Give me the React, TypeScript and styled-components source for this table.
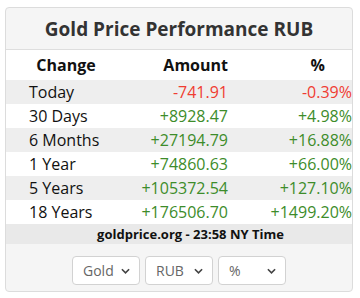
import styled, { createGlobalStyle } from "styled-components";

type Row = {
  label: string;
  amount: string;
  percent: string;
};

const rows: Row[] = [
  { label: "Today", amount: "-741.91", percent: "-0.39%" },
  { label: "30 Days", amount: "+8928.47", percent: "+4.98%" },
  { label: "6 Months", amount: "+27194.79", percent: "+16.88%" },
  { label: "1 Year", amount: "+74860.63", percent: "+66.00%" },
  { label: "5 Years", amount: "+105372.54", percent: "+127.10%" },
  { label: "18 Years", amount: "+176506.70", percent: "+1499.20%" },
];

const selects = [
  { value: "Gold", options: ["Gold", "Silver"] },
  { value: "RUB", options: ["RUB", "USD", "EUR"] },
  { value: "%", options: ["%", "Amount"] },
];

export default function App() {
  return (
    <>
      <GlobalStyle />
      <Card>
        <Header>Gold Price Performance RUB</Header>
        <Table>
          <HeadRow>
            <HeadCell $align="center">Change</HeadCell>
            <HeadCell $align="right">Amount</HeadCell>
            <HeadCell $align="right" $padRight={27}>
              %
            </HeadCell>
          </HeadRow>
          {rows.map((r, i) => {
            const down = r.amount.startsWith("-");
            return (
              <DataRow key={r.label} $striped={i % 2 === 0}>
                <Label>{r.label}</Label>
                <Value $down={down}>{r.amount}</Value>
                <Value $down={down}>{r.percent}</Value>
              </DataRow>
            );
          })}
        </Table>
        <Footer>goldprice.org - 23:58 NY Time</Footer>
        <Controls>
          {selects.map((s) => (
            <SelectBox key={s.value}>
              <Select defaultValue={s.value}>
                {s.options.map((o) => (
                  <option key={o}>{o}</option>
                ))}
              </Select>
              <Chevron viewBox="0 0 10 6">
                <path d="M1 1l4 4 4-4" />
              </Chevron>
            </SelectBox>
          ))}
        </Controls>
      </Card>
    </>
  );
}

const GlobalStyle = createGlobalStyle`
  body {
    margin: 0;
    background: #fff;
    font-family: "Open Sans", "Liberation Sans", sans-serif;
  }
`;

const Card = styled.div`
  margin: 7px 0 0 5px;
  width: 346px;
  border: 1px solid #dcdcdc;
  border-radius: 4px;
  overflow: hidden;
  background: #f5f5f5;
`;

const Header = styled.div`
  height: 41px;
  display: flex;
  align-items: center;
  justify-content: center;
  border-bottom: 1px solid #dedede;
  font-size: 19px;
  font-weight: 700;
  color: #333;
`;

const Table = styled.div`
  background: #fff;
`;

const HeadRow = styled.div`
  display: grid;
  grid-template-columns: 120px 102px 1fr;
  height: 30px;
  align-items: center;
`;

const HeadCell = styled.div<{ $align: string; $padRight?: number }>`
  text-align: ${(p) => p.$align};
  padding-right: ${(p) => p.$padRight ?? 0}px;
  font-size: 16px;
  font-weight: 700;
  color: #111;
`;

const DataRow = styled.div<{ $striped: boolean }>`
  display: grid;
  grid-template-columns: 120px 102px 1fr;
  height: 24px;
  align-items: center;
  background: ${(p) => (p.$striped ? "#eeeeee" : "#fff")};
  font-size: 16px;
`;

const Label = styled.div`
  padding-left: 23px;
  color: #111;
`;

const Value = styled.div<{ $down: boolean }>`
  text-align: right;
  color: ${(p) => (p.$down ? "#f03c32" : "#3d8c2a")};
`;

const Footer = styled.div`
  height: 20px;
  display: flex;
  align-items: center;
  justify-content: center;
  padding-left: 23px;
  background: #e9e9e9;
  font-size: 13px;
  font-weight: 700;
  color: #111;
`;

const Controls = styled.div`
  display: flex;
  justify-content: center;
  gap: 5px;
  padding: 12px 0 6px;
`;

const SelectBox = styled.div`
  position: relative;
  width: 68px;
  height: 29px;
`;

const Select = styled.select`
  appearance: none;
  width: 100%;
  height: 100%;
  padding: 0 0 0 10px;
  border: 1px solid #d2d2d2;
  border-radius: 4px;
  background: #fff;
  font-family: "Open Sans", "Liberation Sans", sans-serif;
  font-size: 14px;
  color: #666;
  outline: none;
`;

const Chevron = styled.svg`
  position: absolute;
  right: 10px;
  top: 12px;
  width: 9px;
  height: 6px;
  pointer-events: none;
  fill: none;
  stroke: #444;
  stroke-width: 1.8;
`;
